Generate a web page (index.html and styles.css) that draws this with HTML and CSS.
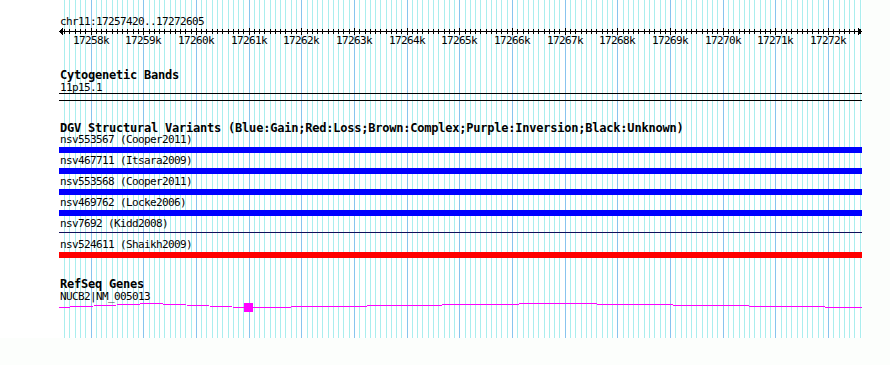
FILE: index.html
```html
<!DOCTYPE html>
<html>
<head>
<meta charset="utf-8">
<title>GBrowse</title>
<link rel="stylesheet" href="styles.css">
</head>
<body>
<div class="panel">
  <svg class="grid" id="grid" width="862" height="338" shape-rendering="crispEdges"></svg>
  <div class="content">
    <svg class="ruler" width="862" height="50" shape-rendering="crispEdges">
      <text class="chr" x="60" y="25">chr11:17257420..17272605</text>
      <rect class="axis" x="59" y="31" width="803" height="1"/>
      <g class="arrow">
        <rect x="60" y="30" width="1" height="3"/>
        <rect x="61" y="29" width="1" height="5"/>
        <rect x="62" y="28" width="1" height="7"/>
        <rect x="860" y="30" width="1" height="3"/>
        <rect x="859" y="29" width="1" height="5"/>
        <rect x="858" y="28" width="1" height="7"/>
      </g>
      <g id="ticks" class="ticks"></g>
      <g class="scale">
        <text x="91" y="44">17258k</text>
        <text x="143" y="44">17259k</text>
        <text x="196" y="44">17260k</text>
        <text x="249" y="44">17261k</text>
        <text x="301" y="44">17262k</text>
        <text x="354" y="44">17263k</text>
        <text x="407" y="44">17264k</text>
        <text x="459" y="44">17265k</text>
        <text x="512" y="44">17266k</text>
        <text x="565" y="44">17267k</text>
        <text x="617" y="44">17268k</text>
        <text x="670" y="44">17269k</text>
        <text x="723" y="44">17270k</text>
        <text x="775" y="44">17271k</text>
        <text x="828" y="44">17272k</text>
      </g>
    </svg>

    <section class="track cyto">
      <div class="track-title">Cytogenetic Bands</div>
      <div class="feat-label after-title">11p15.1</div>
      <div class="band"></div>
    </section>

    <section class="track dgv">
      <div class="track-title">DGV Structural Variants (Blue:Gain;Red:Loss;Brown:Complex;Purple:Inversion;Black:Unknown)</div>
      <div class="sv">
        <div class="feat-label">nsv553567 (Cooper2011)</div>
        <div class="bar gain"></div>
      </div>
      <div class="sv">
        <div class="feat-label">nsv467711 (Itsara2009)</div>
        <div class="bar gain"></div>
      </div>
      <div class="sv">
        <div class="feat-label">nsv553568 (Cooper2011)</div>
        <div class="bar gain"></div>
      </div>
      <div class="sv">
        <div class="feat-label">nsv469762 (Locke2006)</div>
        <div class="bar gain"></div>
      </div>
      <div class="sv">
        <div class="feat-label">nsv7692 (Kidd2008)</div>
        <div class="bar unknown"></div>
      </div>
      <div class="sv">
        <div class="feat-label">nsv524611 (Shaikh2009)</div>
        <div class="bar loss"></div>
      </div>
    </section>

    <section class="track refseq">
      <div class="track-title">RefSeq Genes</div>
      <div class="feat-label after-title">NUCB2|NM_005013</div>
      <svg class="gene" width="803" height="12" shape-rendering="crispEdges">
        <polyline class="intron" points="0,5.5 92.5,1.5 185,5.5"/>
        <polyline class="intron" points="194,5.5 498.5,1.5 803,5.5"/>
        <rect class="exon" x="185" y="1" width="9" height="9"/>
      </svg>
    </section>
  </div>
</div>
<script src="script.js"></script>
</body>
</html>
```

FILE: styles.css
```css
html, body {
  margin: 0;
  padding: 0;
}

body {
  background: #fcfefc;
  color: #000;
  font-family: "DejaVu Sans Mono", "Liberation Mono", monospace;
}

.panel {
  position: relative;
  width: 862px;
  height: 338px;
  background: #fff;
}

.grid {
  position: absolute;
  left: 0;
  top: 0;
}

.gmin {
  fill: #aaeeee;
}

.gmaj {
  fill: #88c4ee;
}

.content {
  position: relative;
}

.ruler {
  display: block;
}

.ruler text {
  font-family: "DejaVu Sans Mono", "Liberation Mono", monospace;
  font-size: 11px;
  letter-spacing: -0.62px;
  fill: #000;
}

.scale text {
  text-anchor: middle;
}

.axis,
.arrow rect,
.ticks rect {
  fill: #000;
}

.track {
  width: 803px;
  padding-left: 59px;
}

.track-title {
  height: 12px;
  padding-left: 1px;
  font-size: 12px;
  font-weight: bold;
  letter-spacing: -0.22px;
  line-height: 12px;
  white-space: nowrap;
}

.feat-label {
  height: 11px;
  padding-left: 1px;
  font-size: 11px;
  letter-spacing: -0.62px;
  line-height: 11px;
  white-space: nowrap;
}

.after-title {
  margin-top: 1px;
}

.cyto {
  margin-top: 19px;
}

.band {
  height: 6px;
  border-top: 1px solid #000;
  border-bottom: 1px solid #000;
}

.dgv {
  margin-top: 21px;
}

.bar {
  height: 6px;
  margin: 2px 0;
}

.gain {
  background: #0000ff;
}

.loss {
  background: #ff0000;
}

.bar.unknown {
  height: 1px;
  margin: 3px 0 6px;
  background: #10105a;
}

.refseq {
  margin-top: 20px;
}

.gene {
  display: block;
}

.intron {
  fill: none;
  stroke: #ff00ff;
  stroke-width: 1;
}

.exon {
  fill: #ff00ff;
}
```

FILE: script.js
```js
(function () {
  var NS = 'http://www.w3.org/2000/svg';
  var start = 17257420, end = 17272605, x0 = 60, width = 800;
  var grid = document.getElementById('grid');
  var ticks = document.getElementById('ticks');
  function px(bp) { return x0 + (bp - start) * width / (end - start); }
  function rect(parent, x, y, w, h, cls) {
    var r = document.createElementNS(NS, 'rect');
    r.setAttribute('x', x);
    r.setAttribute('y', y);
    r.setAttribute('width', w);
    r.setAttribute('height', h);
    if (cls) r.setAttribute('class', cls);
    parent.appendChild(r);
  }
  for (var bp = 17257500; bp <= end; bp += 100) {
    var x = Math.round(px(bp));
    var major = bp % 1000 === 0;
    rect(grid, x, 0, 1, 338, major ? 'gmaj' : 'gmin');
    if (major) rect(ticks, x, 28, 1, 7);
    else rect(ticks, x, 29, 1, 5);
  }
})();
```
